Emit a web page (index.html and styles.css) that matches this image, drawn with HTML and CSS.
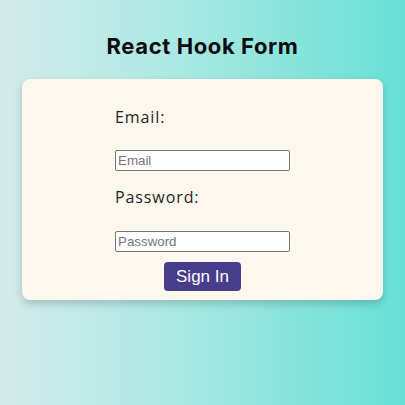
FILE: index.html
```html
<!DOCTYPE html>
<html>
<head>
<meta charset="utf-8">
<link rel="stylesheet" href="styles.css">
</head>
<body>
<h1 class="title">React Hook Form</h1>
<div class="card">
  <form class="form">
    <label class="label" for="email">Email:</label>
    <input class="field field-email" id="email" type="email" placeholder="Email">
    <label class="label label-pass" for="password">Password:</label>
    <input class="field field-pass" id="password" type="password" placeholder="Password">
    <button class="btn" type="button">Sign In</button>
  </form>
</div>
</body>
</html>
```
FILE: styles.css
```css
html, body {
  margin: 0;
  padding: 0;
}
body {
  width: 405px;
  height: 405px;
  overflow: hidden;
  background: linear-gradient(to right, #d4ebeb 0%, #a9e8e3 45%, #66e0d5 100%);
  font-family: Inter, "Noto Sans", sans-serif;
}
.title {
  margin: 32px 0 19px;
  font-size: 22px;
  line-height: 28px;
  font-weight: 700;
  letter-spacing: 0.6px;
  text-align: center;
  color: #0b0b0b;
}
.card {
  margin: 0 22px;
  height: 221px;
  box-sizing: border-box;
  padding: 26px 0 9px;
  background: #fdf8ee;
  border-radius: 8px;
  box-shadow: 0 4px 8px rgba(0, 0, 0, 0.18);
}
.form {
  width: 175px;
  margin: 0 auto;
  display: flex;
  flex-direction: column;
  align-items: flex-start;
}
.label {
  font-family: "Open Sans", "Noto Sans", sans-serif;
  font-size: 16px;
  line-height: 24px;
  letter-spacing: 0.9px;
  color: #1e1e1e;
}
.label-pass {
  margin-top: 14px;
}
.field {
  box-sizing: border-box;
  width: 175px;
  height: 21px;
  margin: 21px 0 0;
  padding: 1px 2px;
  border: 1px solid #767676;
  border-radius: 2px;
  background: #fff;
  font-family: "Liberation Sans", Arial, sans-serif;
  font-size: 13.33px;
}
.field-pass {
  margin-top: 22px;
}
.field::placeholder {
  color: #757575;
}
.btn {
  align-self: center;
  margin-top: 10px;
  width: 77px;
  height: 29px;
  border: none;
  border-radius: 4px;
  background: #483d8b;
  color: #fff;
  font-family: "Liberation Sans", Arial, sans-serif;
  font-size: 17px;
  padding: 0;
}
```
